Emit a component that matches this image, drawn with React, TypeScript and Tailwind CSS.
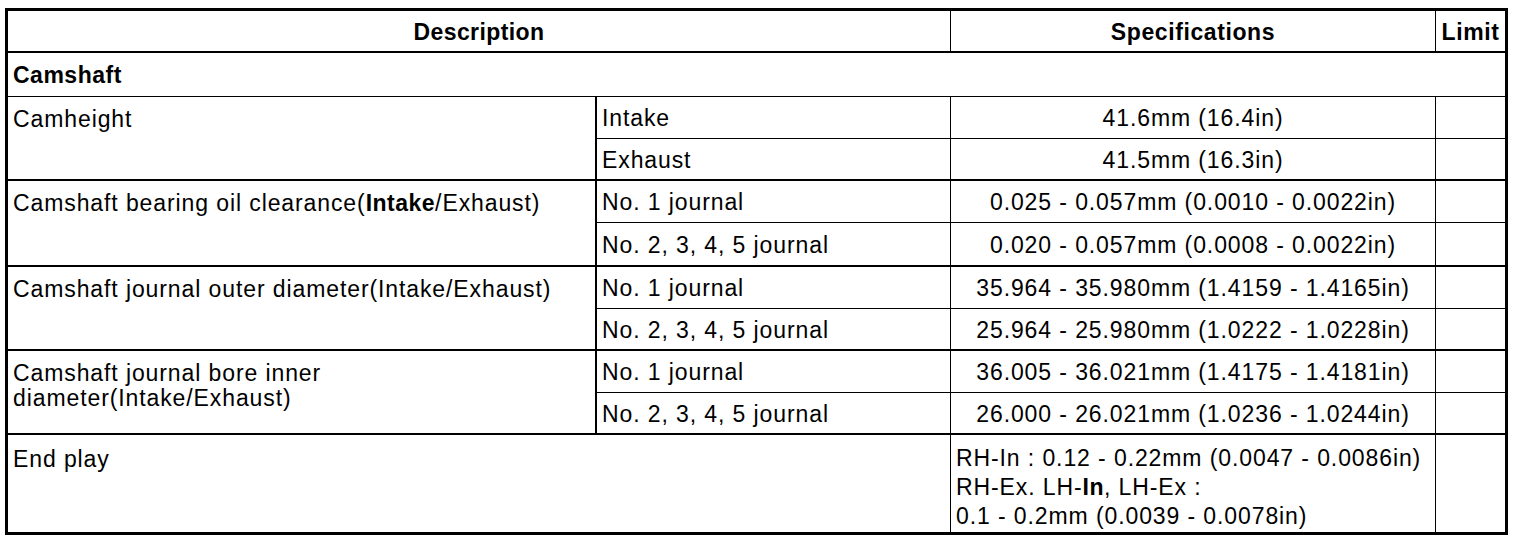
import React from "react";

const base = "flex items-center px-[5px] pt-[2px] text-black";

export default function App() {
  return (
    <div className="bg-white w-[1536px] h-[546px] pt-[8px] pl-[5px]" style={{ fontFamily: '"Liberation Sans", Arial, sans-serif' }}>
      <div className="grid w-[1503px] border-[3px] border-black text-[23px] leading-[25px] tracking-[0.9px] grid-cols-[589px_354px_485px_69px] grid-rows-[42px_44px_42px_42px_42px_44px_42px_42px_42px_42px_97px]">
        {/* Header */}
        <div className={`${base} col-span-2 justify-center font-bold tracking-[0.4px] border-r border-b-2 border-black`}>Description</div>
        <div className={`${base} justify-center font-bold tracking-[0.6px] border-r border-b-2 border-black`}>Specifications</div>
        <div className={`${base} justify-center font-bold tracking-[0.6px] border-b-2 border-black px-0`}>Limit</div>

        {/* Camshaft */}
        <div className={`${base} col-span-4 font-bold tracking-[0.5px] border-b border-black`}>Camshaft</div>

        {/* Camheight */}
        <div className="row-span-2 px-[5px] pt-[10px] border-r-2 border-b-2 border-black">Camheight</div>
        <div className={`${base} border-r border-b border-black`}>Intake</div>
        <div className={`${base} justify-center border-r border-b border-black`}>41.6mm (16.4in)</div>
        <div className="border-b border-black" />
        <div className={`${base} border-r border-b-2 border-black`}>Exhaust</div>
        <div className={`${base} justify-center border-r border-b-2 border-black`}>41.5mm (16.3in)</div>
        <div className="border-b-2 border-black" />

        {/* Bearing oil clearance */}
        <div className="row-span-2 px-[5px] pt-[10px] border-r-2 border-b-2 border-black">
          Camshaft bearing oil clearance(<span className="font-bold tracking-[0.5px]">Intake</span>/Exhaust)
        </div>
        <div className={`${base} border-r border-b border-black`}>No. 1 journal</div>
        <div className={`${base} justify-center border-r border-b border-black`}>0.025 - 0.057mm (0.0010 - 0.0022in)</div>
        <div className="border-b border-black" />
        <div className={`${base} border-r border-b-2 border-black`}>No. 2, 3, 4, 5 journal</div>
        <div className={`${base} justify-center border-r border-b-2 border-black`}>0.020 - 0.057mm (0.0008 - 0.0022in)</div>
        <div className="border-b-2 border-black" />

        {/* Journal outer diameter */}
        <div className="row-span-2 px-[5px] pt-[10px] border-r-2 border-b-2 border-black">
          Camshaft journal outer diameter(Intake/Exhaust)
        </div>
        <div className={`${base} border-r border-b border-black`}>No. 1 journal</div>
        <div className={`${base} justify-center border-r border-b border-black`}>35.964 - 35.980mm (1.4159 - 1.4165in)</div>
        <div className="border-b border-black" />
        <div className={`${base} border-r border-b-2 border-black`}>No. 2, 3, 4, 5 journal</div>
        <div className={`${base} justify-center border-r border-b-2 border-black`}>25.964 - 25.980mm (1.0222 - 1.0228in)</div>
        <div className="border-b-2 border-black" />

        {/* Journal bore inner diameter */}
        <div className="row-span-2 px-[5px] pt-[10px] border-r-2 border-b-2 border-black">
          Camshaft journal bore inner
          <br />
          diameter(Intake/Exhaust)
        </div>
        <div className={`${base} border-r border-b border-black`}>No. 1 journal</div>
        <div className={`${base} justify-center border-r border-b border-black`}>36.005 - 36.021mm (1.4175 - 1.4181in)</div>
        <div className="border-b border-black" />
        <div className={`${base} border-r border-b-2 border-black`}>No. 2, 3, 4, 5 journal</div>
        <div className={`${base} justify-center border-r border-b-2 border-black`}>26.000 - 26.021mm (1.0236 - 1.0244in)</div>
        <div className="border-b-2 border-black" />

        {/* End play */}
        <div className="col-span-2 px-[5px] pt-[12px] border-r border-black">End play</div>
        <div className="px-[5px] pt-[11px] border-r border-black">
          <div className="leading-[25px]">RH-In : 0.12 - 0.22mm (0.0047 - 0.0086in)</div>
          <div className="mt-[4px] leading-[25px]">
            RH-Ex. LH-<span className="font-bold tracking-[0.5px]">In</span>, LH-Ex :
          </div>
          <div className="mt-[4px] leading-[25px]">0.1 - 0.2mm (0.0039 - 0.0078in)</div>
        </div>
        <div />
      </div>
    </div>
  );
}
